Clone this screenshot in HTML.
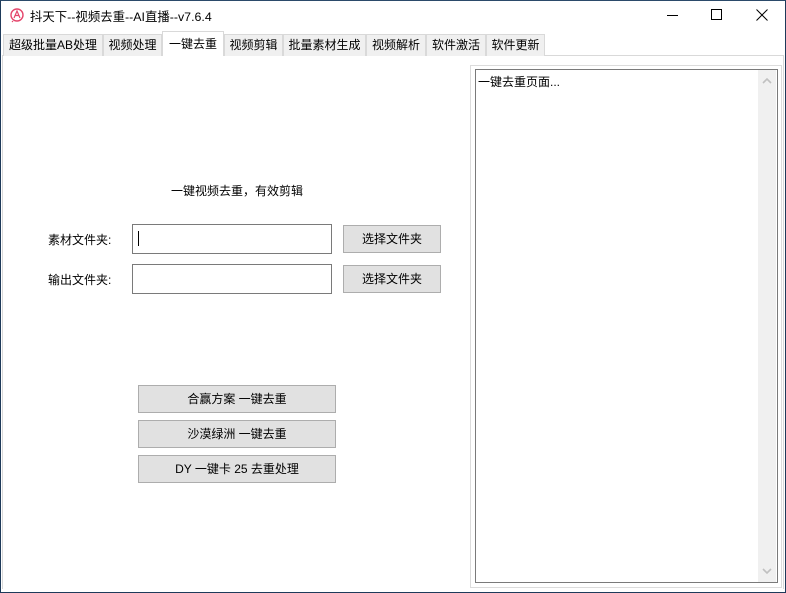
<!DOCTYPE html><html><head><meta charset="utf-8"><style>
*{margin:0;padding:0;box-sizing:border-box}
body{width:786px;height:593px;overflow:hidden;background:#fff;font-family:"Liberation Sans","Noto Sans CJK SC",sans-serif;font-size:12px;color:#000;position:relative}
.a{position:absolute}
.win{left:0;top:0;width:786px;height:593px;border:1px solid #1e3a5a;border-top-color:#2b4a6a}
.tab{position:absolute;top:34px;height:22px;border:1px solid #d9d9d9;border-bottom:none;background:#f0f0f0;text-align:center;line-height:21px;font-size:12px}
.sel{top:31px;height:25px;background:#fff;border-color:#d9d9d9;z-index:2;line-height:24px}
.inp{position:absolute;border:1px solid #7a7a7a;background:#fff}
.btn{position:absolute;border:1px solid #adadad;background:#e1e1e1;text-align:center;font-size:12px}
</style></head><body>
<div class="a win"></div>
<svg class="a" style="left:9px;top:7px" width="16" height="16" viewBox="0 0 16 16"><circle cx="8" cy="8" r="6" fill="none" stroke="#e4456b" stroke-width="1.4"/><path d="M4 14 L3 15 M5 11 L8 4 L11 11 M6.2 8.5h3.6" stroke="#e4456b" stroke-width="1.2" fill="none"/></svg>
<div class="a" style="left:30px;top:7px;font-size:12.4px">抖天下--视频去重--AI直播--v7.6.4</div>
<div class="a" style="left:667px;top:15px;width:11px;height:1px;background:#000"></div>
<div class="a" style="left:711px;top:9px;width:11px;height:11px;border:1px solid #000"></div>
<svg class="a" style="left:756px;top:9px" width="12" height="12"><path d="M0.5 0.5L11.5 11.5M11.5 0.5L0.5 11.5" stroke="#000" stroke-width="1"/></svg>
<div class="a" style="left:2px;top:55px;width:782px;height:534px;border:1px solid #d9d9d9;border-bottom:none;border-right:1px solid #d9d9d9"></div>
<div class="tab" style="left:3px;width:100px">超级批量AB处理</div>
<div class="tab" style="left:103px;width:59px">视频处理</div>
<div class="tab sel" style="left:162px;width:62px">一键去重</div>
<div class="tab" style="left:224px;width:59px">视频剪辑</div>
<div class="tab" style="left:283px;width:83px">批量素材生成</div>
<div class="tab" style="left:366px;width:60px">视频解析</div>
<div class="tab" style="left:426px;width:60px">软件激活</div>
<div class="tab" style="left:486px;width:59px">软件更新</div>
<div class="a" style="left:171px;top:182px">一键视频去重，有效剪辑</div>
<div class="a" style="left:48px;top:231px">素材文件夹:</div>
<div class="a" style="left:48px;top:271px">输出文件夹:</div>
<div class="inp" style="left:132px;top:224px;width:200px;height:30px"><div class="a" style="left:5px;top:6px;width:1px;height:15px;background:#000"></div></div>
<div class="inp" style="left:132px;top:264px;width:200px;height:30px"></div>
<div class="btn" style="left:343px;top:225px;width:98px;height:28px;line-height:26px">选择文件夹</div>
<div class="btn" style="left:343px;top:265px;width:98px;height:28px;line-height:26px">选择文件夹</div>
<div class="btn" style="left:138px;top:385px;width:198px;height:28px;line-height:26px">合赢方案 一键去重</div>
<div class="btn" style="left:138px;top:420px;width:198px;height:28px;line-height:26px">沙漠绿洲 一键去重</div>
<div class="btn" style="left:138px;top:455px;width:198px;height:28px;line-height:26px">DY 一键卡 25 去重处理</div>
<div class="a" style="left:470px;top:65px;width:312px;height:523px;border:1px solid #dcdcdc"></div>
<div class="a" style="left:475px;top:69px;width:303px;height:514px;border:1px solid #7a7a7a;background:#fff"></div>
<div class="a" style="left:478px;top:73px">一键去重页面...</div>
<div class="a" style="left:758px;top:70px;width:18px;height:512px;background:#f0f0f0"></div>
<svg class="a" style="left:761px;top:77px" width="12" height="8"><path d="M2 6L6 2L10 6" stroke="#c0c0c0" stroke-width="1.6" fill="none"/></svg>
<svg class="a" style="left:761px;top:567px" width="12" height="8"><path d="M2 2L6 6L10 2" stroke="#c0c0c0" stroke-width="1.6" fill="none"/></svg>
</body></html>
